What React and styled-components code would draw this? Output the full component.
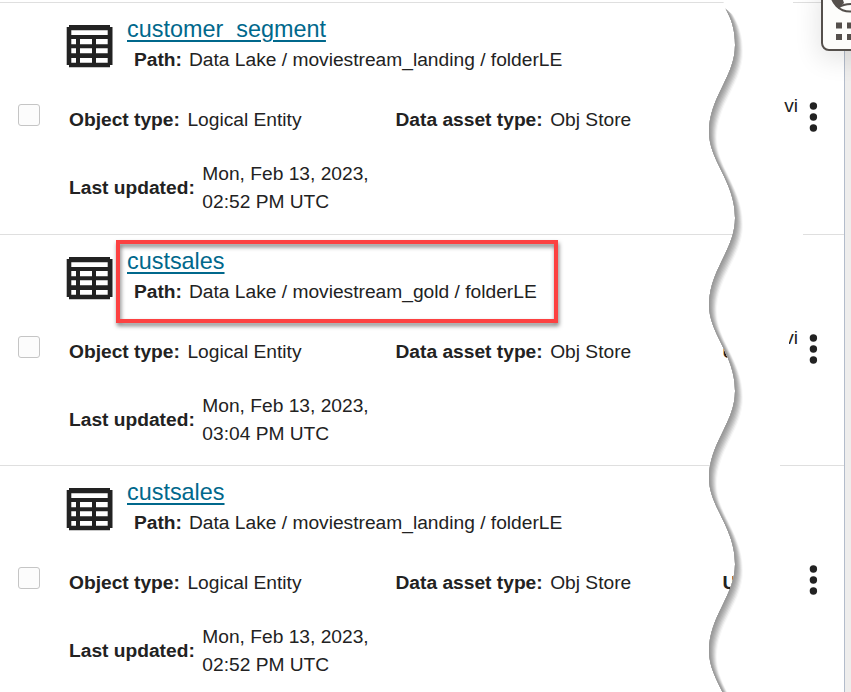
import React from "react";
import styled, { createGlobalStyle } from "styled-components";

const Global = createGlobalStyle`
  * { box-sizing: border-box; }
  html, body { margin: 0; background: #fff; overflow: hidden; }
`;

const Page = styled.div`
  position: relative;
  display: flex;
  width: 851px;
  height: 692px;
  overflow: hidden;
  background: #fff;
  color: #222;
  font: 19.2px/28px "Liberation Sans", Arial, sans-serif;
`;

const List = styled.main`
  width: 844px;
  flex: none;
  padding-top: 2px;
`;

const Gutter = styled.aside`
  width: 7px;
  border-left: 1px solid #b3bccb;
  background: #eeedec;
`;

const Row = styled.article`
  display: flex;
  height: ${(p) => p.$height}px;
`;

const Entry = styled.div`
  display: flex;
  width: ${(p) => p.$width}px;
  flex: none;
  border-top: 1px solid #dfdfdf;
`;

const CheckCell = styled.div`
  width: 66px;
  flex: none;
  padding: 101px 0 0 18px;
`;

const Check = styled.span`
  display: block;
  width: 22px;
  height: 22px;
  border: 1px solid #c5c5c5;
  border-radius: 3px;
  background: #fcfcfc;
`;

const Body = styled.div`
  flex: 1;
  min-width: 0;
  padding-top: 10px;
`;

const Header = styled.header`
  display: flex;
  height: 65px;
`;

const TableIcon = styled.svg`
  width: 47px;
  height: 44px;
  margin: 11px 14px 0 0;
  flex: none;
`;

const Title = styled.a`
  display: block;
  width: max-content;
  height: 33px;
  color: #00688c;
  font-size: 23.4px;
  line-height: 32px;
  text-decoration: underline;
  text-decoration-thickness: 2px;
  text-underline-offset: 3px;
`;

const Path = styled.div`
  display: flex;
  gap: 7px;
  padding-left: 7px;
  white-space: nowrap;
`;

const Facts = styled.div`
  display: grid;
  grid-template-columns: 326.5px 327px auto;
  padding: 28px 0 0 3px;
  height: 82px;
  white-space: nowrap;
`;

const Fact = styled.div`
  display: flex;
  align-items: center;
  align-self: start;
  gap: 7.5px;
`;

const Updated = styled(Fact)`
  padding-left: 3px;
`;

const Actions = styled.div`
  position: relative;
  z-index: 2;
  display: flex;
  justify-content: flex-end;
  flex: none;
  width: ${(p) => p.$width}px;
  border-top: 1px solid #dfdfdf;
`;

const Owner = styled.span`
  display: flex;
  justify-content: flex-end;
  flex: none;
  width: ${(p) => p.$width}px;
  height: 28px;
  margin: 89px 10px 0 0;
  overflow: hidden;
`;

const Menu = styled.svg`
  width: 10px;
  height: 32px;
  flex: none;
  margin: 98px 26px 0 0;
`;

const Tear = styled.svg`
  position: absolute;
  inset: 0;
  z-index: 1;
  width: 844px;
  height: 692px;
`;

const Highlight = styled.div`
  position: absolute;
  left: 116px;
  top: 240px;
  width: 442px;
  height: 83px;
  border: 4px solid #fc4141;
  filter: drop-shadow(1px 3px 2px rgba(0, 0, 0, 0.5));
`;

const Widget = styled.div`
  position: absolute;
  z-index: 3;
  left: 821px;
  top: -20px;
  width: 60px;
  height: 71px;
  border: 2px solid #55504c;
  border-radius: 8px;
  background: #fdfdfb;
  box-shadow: -2px 8px 26px rgba(0, 0, 0, 0.11);
`;

const WidgetArt = styled.svg`
  display: block;
  width: 56px;
  height: 67px;
`;

const rows = [
  { name: "customer_segment", folder: "moviestream_landing", time: "02:52 PM UTC", height: 232, actions: 51, owner: 16 },
  { name: "custsales", folder: "moviestream_gold", time: "03:04 PM UTC", height: 231, actions: 41, owner: 9 },
  { name: "custsales", folder: "moviestream_landing", time: "02:52 PM UTC", height: 232, actions: 64, owner: 0 },
];

const period = (y) =>
  `C 735 ${y + 32} 709 ${y + 52} 709 ${y + 87} C 709 ${y + 116} 735 ${y + 136} 735 ${y + 173}`;
const wave = `M 725 8 C 732 19 735 31 735 45 ${[45, 218, 391, 564].map(period).join(" ")}`;
const paper = `${wave} V 760 H 600 V 8 Z`;
const shades = ["#f8f8f8", "#e9e9e9", "#d8d8d8", "#c8c8c8", "#b9b9b9", "#acacac", "#a2a2a2", "#999"];

function TornEdge() {
  return (
    <Tear viewBox="0 0 844 692">
      <clipPath id="beyond">
        <path d={`${wave} H 844 V 0 H 723 Z`} />
      </clipPath>
      <g clipPath="url(#beyond)">
        <rect width="844" height="692" fill="#fff" />
        {shades.map((color, i) => (
          <path key={color} d={paper} fill={color} transform={`translate(${8 - i} ${(8 - i) * 0.85})`} />
        ))}
      </g>
    </Tear>
  );
}

function Entity({ row }) {
  return (
    <Row $height={row.height}>
      <Entry $width={844 - row.actions}>
        <CheckCell><Check /></CheckCell>
        <Body>
          <Header>
            <TableIcon viewBox="0 0 47 44">
              <path fill="#222" fillRule="evenodd" d="M3 1H44V3H46.5V41H44V43.3H3V41H.7V3H3Z M5.3 6.3V11H41.7V6.3Z M5.3 15V20.2H10V15Z M14 15V20.2H26V15Z M30 15V20.2H41.7V15Z M5.3 24.3V29.3H10V24.3Z M14 24.3V29.3H26V24.3Z M30 24.3V29.3H41.7V24.3Z M5.3 34V38.7H10V34Z M14 34V38.7H26V34Z M30 34V38.7H41.7V34Z" />
            </TableIcon>
            <div>
              <Title>{row.name}</Title>
              <Path>
                <b>Path:</b>
                <span>Data Lake / {row.folder} / folderLE</span>
              </Path>
            </div>
          </Header>
          <Facts>
            <Fact><b>Object type:</b><span>Logical Entity</span></Fact>
            <Fact><b>Data asset type:</b><span>Obj Store</span></Fact>
            <Fact><b>U</b></Fact>
          </Facts>
          <Updated>
            <b>Last updated:</b>
            <span>Mon, Feb 13, 2023,<br />{row.time}</span>
          </Updated>
        </Body>
      </Entry>
      <Actions $width={row.actions}>
        {row.owner > 0 && <Owner $width={row.owner}>vi</Owner>}
        <Menu viewBox="0 0 10 32">
          <circle cx="5.4" cy="5" r="3.7" fill="#222" />
          <circle cx="5.4" cy="16" r="3.7" fill="#222" />
          <circle cx="5.4" cy="27" r="3.7" fill="#222" />
        </Menu>
      </Actions>
    </Row>
  );
}

export default function App() {
  return (
    <>
      <Global />
      <Page>
        <List>
          {rows.map((row, i) => <Entity key={i} row={row} />)}
        </List>
        <Gutter />
        <TornEdge />
        <Highlight />
        <Widget>
          <WidgetArt viewBox="0 0 56 67">
            <circle cx="27" cy="10.5" r="19" fill="none" stroke="#55504c" strokeWidth="2" />
            <path d="M8 15H19L21 21L16 26Q10 22 8 15Z" fill="#55504c" />
            <path d="M15 26Q20 22 28 22" fill="none" stroke="#55504c" strokeWidth="2" />
            <g fill="#55504c">
              <rect x="13" y="40.5" width="6" height="6" />
              <rect x="24" y="40.5" width="6" height="6" />
              <rect x="13" y="52" width="6" height="6" />
              <rect x="24" y="52" width="6" height="6" />
            </g>
          </WidgetArt>
        </Widget>
      </Page>
    </>
  );
}
